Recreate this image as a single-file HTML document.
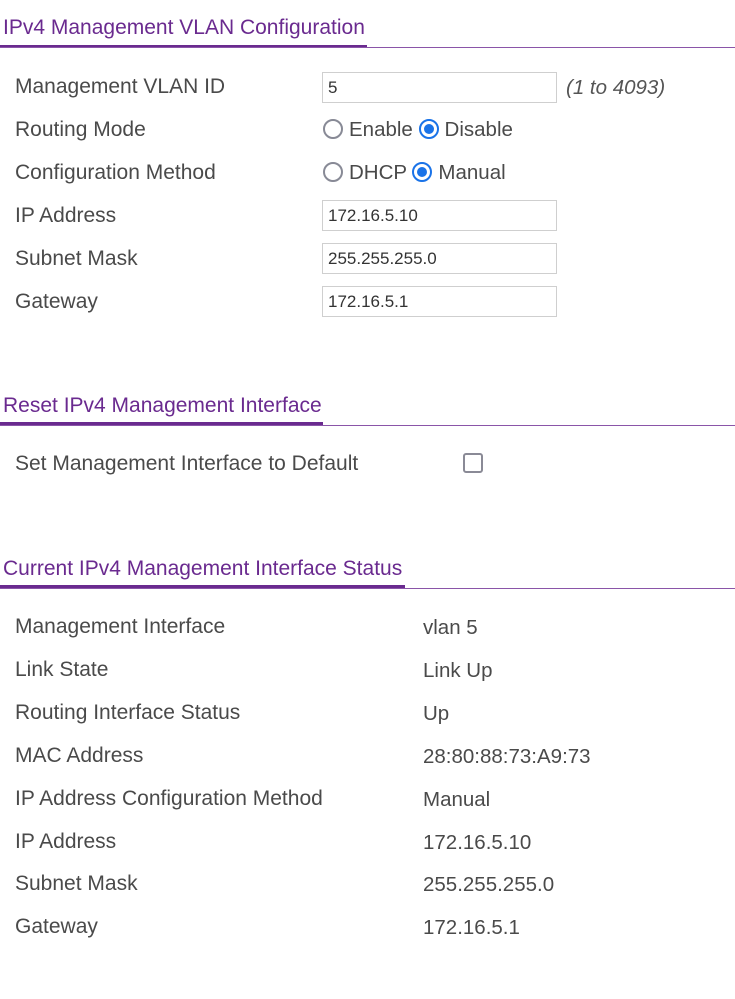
<!DOCTYPE html>
<html><head><meta charset="utf-8"><style>
body{margin:0;width:735px;height:999px;background:#fff;font-family:"Liberation Sans",Arial,sans-serif;position:relative;overflow:hidden}
.a{position:absolute;white-space:nowrap}
.h{color:#6a2a8f;font-size:21px;left:3px}
.ul{position:absolute;height:3px;background:#6a2a8f;left:0}
.tl{position:absolute;height:1px;background:#8a55a8;left:0;width:735px}
.l{color:#4a4a4a;font-size:21px;left:15px}
.v{color:#4a4a4a;font-size:20.5px;left:423px}
.in{position:absolute;left:322px;width:235px;height:31px;border:1px solid #cfcfcf;font-size:17px;color:#333;box-sizing:border-box;padding-left:5px;line-height:30px}
.r{display:inline-block;width:20px;height:20px;border:2px solid #888a96;border-radius:50%;box-sizing:border-box;vertical-align:-3px;margin-right:6px;position:relative}
.r.on{border-color:#1a73e8}
.r.on:after{content:"";position:absolute;left:3px;top:3px;width:10px;height:10px;border-radius:50%;background:#1a73e8}
</style></head><body>
<div class="a h" style="top:16px">IPv4 Management VLAN Configuration</div>
<div class="ul" style="top:45px;width:367px"></div><div class="tl" style="top:47px"></div>

<div class="a l" style="top:75px">Management VLAN ID</div>
<div class="in" style="top:72px">5</div>
<div class="a" style="left:566px;top:76px;font-size:20.5px;font-style:italic;color:#555">(1 to 4093)</div>
<div class="a l" style="top:118px">Routing Mode</div>
<div class="a" style="left:323px;top:118px;font-size:20.5px;color:#4a4a4a"><span class="r"></span>Enable <span class="r on"></span>Disable</div>
<div class="a l" style="top:161px">Configuration Method</div>
<div class="a" style="left:323px;top:161px;font-size:20.5px;color:#4a4a4a"><span class="r"></span>DHCP <span class="r on"></span>Manual</div>
<div class="a l" style="top:204px">IP Address</div>
<div class="in" style="top:200px">172.16.5.10</div>
<div class="a l" style="top:247px">Subnet Mask</div>
<div class="in" style="top:243px">255.255.255.0</div>
<div class="a l" style="top:290px">Gateway</div>
<div class="in" style="top:286px">172.16.5.1</div>

<div class="a h" style="top:394px">Reset IPv4 Management Interface</div>
<div class="ul" style="top:422px;width:323px"></div><div class="tl" style="top:425px"></div>
<div class="a l" style="top:452px">Set Management Interface to Default</div>
<div class="a" style="left:463px;top:453px;width:20px;height:20px;border:2px solid #8a8a96;border-radius:3px;box-sizing:border-box"></div>

<div class="a h" style="top:557px">Current IPv4 Management Interface Status</div>
<div class="ul" style="top:585px;width:405px"></div><div class="tl" style="top:588px"></div>
<div class="a l" style="top:615px">Management Interface</div><div class="a v" style="top:616px">vlan 5</div>
<div class="a l" style="top:658px">Link State</div><div class="a v" style="top:659px">Link Up</div>
<div class="a l" style="top:701px">Routing Interface Status</div><div class="a v" style="top:702px">Up</div>
<div class="a l" style="top:744px">MAC Address</div><div class="a v" style="top:745px">28:80:88:73:A9:73</div>
<div class="a l" style="top:787px">IP Address Configuration Method</div><div class="a v" style="top:788px">Manual</div>
<div class="a l" style="top:830px">IP Address</div><div class="a v" style="top:831px">172.16.5.10</div>
<div class="a l" style="top:872px">Subnet Mask</div><div class="a v" style="top:873px">255.255.255.0</div>
<div class="a l" style="top:915px">Gateway</div><div class="a v" style="top:916px">172.16.5.1</div>
</body></html>
